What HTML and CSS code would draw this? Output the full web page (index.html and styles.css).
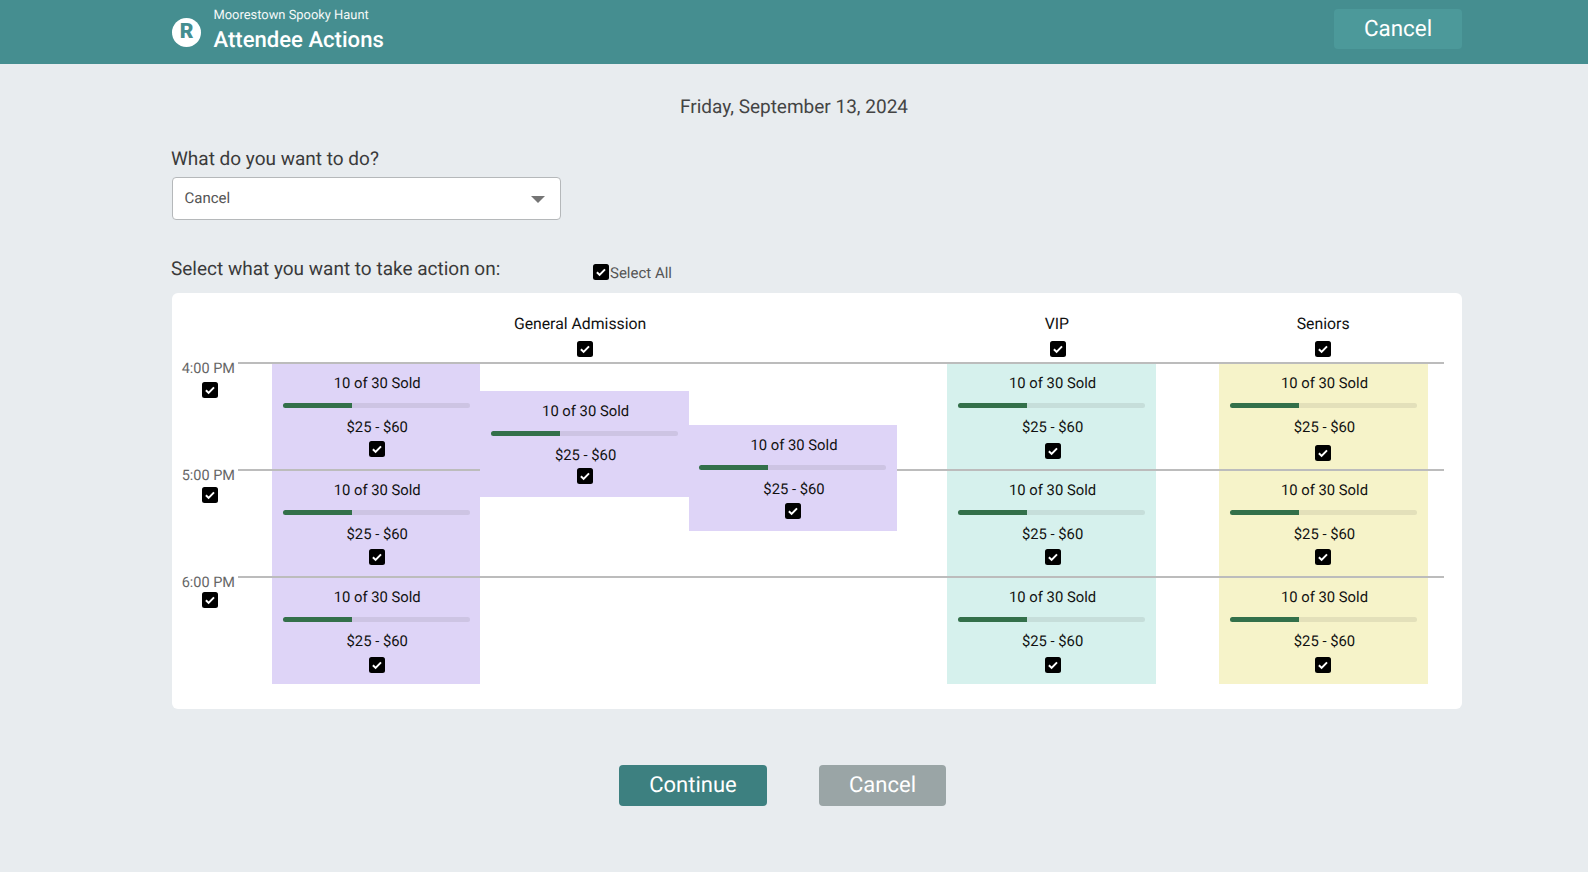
FILE: index.html
```html
<!DOCTYPE html>
<html lang="en">
<head>
<meta charset="utf-8">
<title>Attendee Actions</title>
<link rel="stylesheet" href="styles.css">
</head>
<body>
<svg class="sprite" width="0" height="0" aria-hidden="true"><symbol id="chk" viewBox="0 0 16 16"><rect width="16" height="16" rx="2.5" fill="#000"/><path d="M3.9 8.3l2.7 2.6 5.4-5.5" fill="none" stroke="#fff" stroke-width="2"/></symbol></svg>
<header class="topbar">
  <div class="brand">
    <span class="logo">R</span>
    <div class="brand-text">
      <div class="org">Moorestown Spooky Haunt</div>
      <div class="title">Attendee Actions</div>
    </div>
  </div>
  <button class="top-cancel">Cancel</button>
</header>
<main class="page">
  <div class="date">Friday, September 13, 2024</div>
  <label class="q">What do you want to do?</label>
  <div class="select"><span>Cancel</span><i class="caret"></i></div>
  <div class="select-row">
    <div class="q q-tight">Select what you want to take action on:</div>
    <div class="select-all"><svg class="cb"><use href="#chk"/></svg><span>Select All</span></div>
  </div>
  <section class="board">
    <div class="heads">
      <div class="head head-ga"><span>General Admission</span><svg class="cb"><use href="#chk"/></svg></div>
      <div class="head head-vip"><span>VIP</span><svg class="cb"><use href="#chk"/></svg></div>
      <div class="head head-sr"><span>Seniors</span><svg class="cb"><use href="#chk"/></svg></div>
    </div>
    <div class="grid">
      <div class="rules"><i></i><i></i><i></i></div>
      <div class="times">
        <div class="time"><span>4:00 PM</span><svg class="cb"><use href="#chk"/></svg></div>
        <div class="time"><span>5:00 PM</span><svg class="cb"><use href="#chk"/></svg></div>
        <div class="time"><span>6:00 PM</span><svg class="cb"><use href="#chk"/></svg></div>
      </div>
      <div class="col col-ga">
        <div class="slot purple"><p>10 of 30 Sold</p><div class="bar"><b></b></div><p>$25 - $60</p><svg class="cb"><use href="#chk"/></svg></div>
        <div class="slot purple s2"><p>10 of 30 Sold</p><div class="bar"><b></b></div><p>$25 - $60</p><svg class="cb"><use href="#chk"/></svg></div>
        <div class="slot purple s3"><p>10 of 30 Sold</p><div class="bar"><b></b></div><p>$25 - $60</p><svg class="cb"><use href="#chk"/></svg></div>
      </div>
      <div class="col col-ga2">
        <div class="slot purple raised"><p>10 of 30 Sold</p><div class="bar"><b></b></div><p>$25 - $60</p><svg class="cb"><use href="#chk"/></svg></div>
      </div>
      <div class="col col-ga3">
        <div class="slot purple raised"><p>10 of 30 Sold</p><div class="bar"><b></b></div><p>$25 - $60</p><svg class="cb"><use href="#chk"/></svg></div>
      </div>
      <div class="col col-vip">
        <div class="slot teal"><p>10 of 30 Sold</p><div class="bar"><b></b></div><p>$25 - $60</p><svg class="cb"><use href="#chk"/></svg></div>
        <div class="slot teal s2"><p>10 of 30 Sold</p><div class="bar"><b></b></div><p>$25 - $60</p><svg class="cb"><use href="#chk"/></svg></div>
        <div class="slot teal s3"><p>10 of 30 Sold</p><div class="bar"><b></b></div><p>$25 - $60</p><svg class="cb"><use href="#chk"/></svg></div>
      </div>
      <div class="col col-sr">
        <div class="slot yellow"><p>10 of 30 Sold</p><div class="bar"><b></b></div><p>$25 - $60</p><svg class="cb"><use href="#chk"/></svg></div>
        <div class="slot yellow s2"><p>10 of 30 Sold</p><div class="bar"><b></b></div><p>$25 - $60</p><svg class="cb"><use href="#chk"/></svg></div>
        <div class="slot yellow s3"><p>10 of 30 Sold</p><div class="bar"><b></b></div><p>$25 - $60</p><svg class="cb"><use href="#chk"/></svg></div>
      </div>
    </div>
  </section>
  <div class="actions">
    <button class="btn btn-go">Continue</button>
    <button class="btn btn-no">Cancel</button>
  </div>
</main>
</body>
</html>
```
FILE: styles.css
```css
* { box-sizing: border-box; }
html, body { margin: 0; height: 100%; }
body { background: #e8ecef; font-family: Roboto, "Liberation Sans", sans-serif; color: #333; overflow: hidden; text-rendering: geometricPrecision; }
.sprite { position: absolute; }
.cb { display: block; width: 16px; height: 16px; flex: none; }

.topbar { height: 64px; background: #458e90; display: flex; align-items: center; justify-content: space-between; padding: 0 126px 0 172px; color: #fff; }
.brand { display: flex; align-items: center; gap: 13px; }
.logo { width: 29px; height: 29px; border-radius: 50%; background: #fff; color: #458e90; font-weight: 900; font-size: 21px; line-height: 29px; text-align: center; }
.brand-text { display: flex; flex-direction: column; margin-left: -0.5px; }
.org { font-size: 12.9px; line-height: 16px; margin-top: -2px; opacity: .95; }
.title { font-size: 22.1px; font-weight: 500; line-height: 30px; margin-top: 1px; }
.top-cancel { width: 128px; height: 40px; margin-top: -6px; border: 0; border-radius: 4px; background: #4c999a; color: #fff; font: 400 22.4px Roboto, sans-serif; padding: 0; text-rendering: geometricPrecision; }

.page { padding: 0 126px 0 172px; }
.date { font-size: 19px; line-height: 24px; text-align: center; color: #444; margin: 31px -126px 0 -172px; }
.q { display: block; font-size: 19px; line-height: 24px; margin: 28px 0 0 -1px; color: #3a3a3a; }
.select { width: 389px; height: 43px; margin: 6px 0 0 -0.5px; background: #fff; border: 1px solid #b5b8ba; border-radius: 4px; display: flex; align-items: center; justify-content: space-between; padding: 0 15px 1px 12px; font-size: 15px; color: #555; }
.caret { width: 0; height: 0; border-left: 7px solid transparent; border-right: 7px solid transparent; border-top: 7px solid #757575; margin-top: 2px; }
.select-row { display: flex; align-items: flex-start; margin-top: 37px; }
.q-tight { margin-top: 0; width: 422px; }
.select-all { display: flex; align-items: center; gap: 1px; margin-top: 5px; font-size: 15px; color: #555; }
.select-all span { margin-top: 2px; }

.board { height: 416px; margin-top: 11px; background: #fff; border-radius: 6px; }
.heads { display: grid; grid-template-columns: 100px 625.2px 50px 208.4px 63.4px 208.4px; height: 70px; padding-top: 21px; }
.head { display: flex; flex-direction: column; align-items: center; gap: 7px; font-size: 15.8px; line-height: 20px; color: #111; }
.head-ga { grid-column: 2; }
.head-vip { grid-column: 4; }
.head-sr { grid-column: 6; }
.head-ga span { margin-right: 9px; }
.head-vip span { margin-left: 11px; }
.head-vip .cb { margin-left: 13px; }

.grid { position: relative; display: grid; grid-template-columns: 100px repeat(3, 208.4px) 50px 208.8px 63px 209px; height: 321px; }
.rules { position: absolute; left: 66px; right: 18px; top: -1px; bottom: 0; z-index: 1; display: flex; flex-direction: column; pointer-events: none; }
.rules i { display: block; height: 107px; border-top: 2px solid #bcbcbc; }
.times { position: relative; z-index: 2; }
.time { height: 107px; display: flex; flex-direction: column; font-size: 14.5px; line-height: 20px; color: #666; }
.time span { display: block; width: 64px; text-align: right; margin: -4px 0 0 -1px; }
.time .cb { margin: 3px 0 0 30px; }
.time:nth-child(2) .cb { margin-top: 1px; }
.time:nth-child(3) .cb { margin-top: -1px; }

.col-ga { grid-column: 2; }
.col-ga2 { grid-column: 3; padding-top: 28px; }
.col-ga3 { grid-column: 4; padding-top: 62px; }
.col-vip { grid-column: 6; }
.col-sr { grid-column: 8; }

.slot { height: 107px; padding-top: 10px; display: flex; flex-direction: column; align-items: center; font-size: 14.8px; color: #111; }
.raised { position: relative; z-index: 2; height: 106px; }
.purple { background: #ded4f7; }
.teal { background: #d6f1ed; }
.yellow { background: #f6f3c9; }
.slot p { margin: 0; line-height: 20px; padding-left: 2px; }
.bar { width: 187px; height: 5px; margin: 10px 0 9px; border-radius: 2.5px; background: rgba(60, 60, 60, .1); flex: none; }
.bar b { display: block; width: 69px; height: 100%; background: #33704a; border-radius: 2.5px 0 0 2.5px; }
.slot .cb { margin-top: 4px; }
.col-ga .cb { margin-left: 1px; }
.col-ga2 .cb { margin-top: 3px; }
.col-ga3 .cb { margin-top: 4px; }
.teal .cb { margin-top: 6px; margin-left: 3px; }
.yellow .cb { margin-top: 8px; margin-right: 1px; }
.slot.s2 .cb { margin-top: 5px; }
.slot.s3 .cb { margin-top: 6px; }

.actions { display: flex; gap: 52px; margin-top: 56px; margin-left: 447px; }
.btn { height: 41px; border: 0; border-radius: 4px; color: #fff; font: 400 22px Roboto, sans-serif; padding: 0; text-rendering: geometricPrecision; }
.btn-go { width: 148px; background: #3d8080; }
.btn-no { width: 127px; background: #9aa5a6; }
```
